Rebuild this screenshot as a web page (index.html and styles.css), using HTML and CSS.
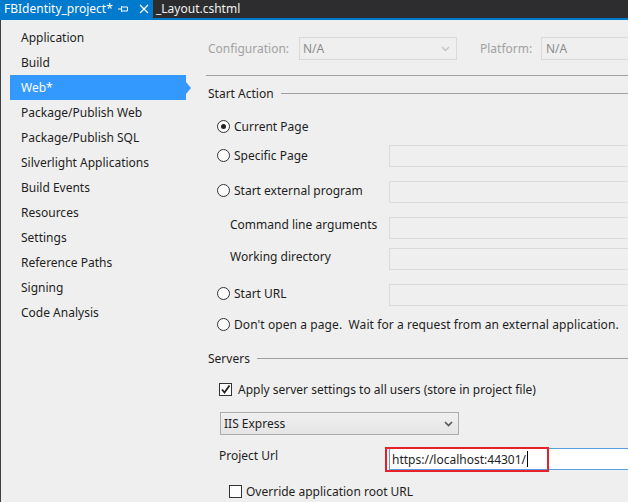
FILE: index.html
```html
<!DOCTYPE html>
<html>
<head>
<meta charset="utf-8">
<link rel="stylesheet" href="styles.css">
</head>
<body>
<div class="tabs">
  <div class="tab active">
    <span class="tab-title">FBIdentity_project*</span>
    <svg class="pin" width="10" height="8" viewBox="0 0 10 8"><path d="M0 4H3M3.5 1V7M3.5 2H9.5V6H3.5" fill="none" stroke="#fff" stroke-width="1"/></svg>
    <svg class="close" width="10" height="10" viewBox="0 0 10 10"><path d="M1 1L9 9M9 1L1 9" stroke="#fff" stroke-width="1.3"/></svg>
  </div>
  <div class="tab">
    <span class="tab-title">_Layout.cshtml</span>
  </div>
</div>
<div class="main">
  <nav class="sidebar">
    <div class="nav-item">Application</div>
    <div class="nav-item">Build</div>
    <div class="nav-item selected">Web*</div>
    <div class="nav-item">Package/Publish Web</div>
    <div class="nav-item">Package/Publish SQL</div>
    <div class="nav-item">Silverlight Applications</div>
    <div class="nav-item">Build Events</div>
    <div class="nav-item">Resources</div>
    <div class="nav-item">Settings</div>
    <div class="nav-item">Reference Paths</div>
    <div class="nav-item">Signing</div>
    <div class="nav-item">Code Analysis</div>
  </nav>
  <section class="content">
    <div class="config-row">
      <span class="dim-label config-label">Configuration:</span>
      <div class="combo disabled config-combo"><span>N/A</span><svg class="chev" width="9" height="6" viewBox="0 0 9 6"><path d="M1 1L4.5 4.5L8 1" fill="none" stroke="#c4c4c4" stroke-width="1.4"/></svg></div>
      <span class="dim-label platform-label">Platform:</span>
      <div class="combo disabled platform-combo"><span>N/A</span></div>
    </div>
    <div class="rule"></div>
    <div class="section-head"><span>Start Action</span><div class="head-line"></div></div>

    <div class="row r-current"><label class="opt"><span class="radio checked"></span>Current Page</label></div>
    <div class="row r-specific"><label class="opt"><span class="radio"></span>Specific Page</label><div class="field"></div></div>
    <div class="row r-ext"><label class="opt"><span class="radio"></span>Start external program</label><div class="field"></div></div>
    <div class="row r-cmd"><span class="sub-label">Command line arguments</span><div class="field"></div></div>
    <div class="row r-work"><span class="sub-label">Working directory</span><div class="field"></div></div>
    <div class="row r-url"><label class="opt"><span class="radio"></span>Start URL</label><div class="field"></div></div>
    <div class="row r-dont"><label class="opt"><span class="radio"></span>Don't open a page.&nbsp; Wait for a request from an external application.</label></div>

    <div class="section-head servers-head"><span>Servers</span><div class="head-line"></div></div>
    <div class="check-row"><span class="checkbox checked"><svg width="11" height="11" viewBox="0 0 11 11"><path d="M2 5.5L4.5 8.5L9.5 1.5" fill="none" stroke="#222" stroke-width="1.8"/></svg></span>Apply server settings to all users (store in project file)</div>
    <div class="combo server-combo"><span>IIS Express</span><svg class="chev" width="9" height="6" viewBox="0 0 9 6"><path d="M1 1L4.5 4.5L8 1" fill="none" stroke="#555" stroke-width="1.6"/></svg></div>
    <div class="url-row">
      <span class="url-label">Project Url</span>
      <div class="url-field"><span class="url-text">https://localhost:44301/</span><span class="caret"></span><div class="highlight"></div></div>
    </div>
    <div class="check-row override"><span class="checkbox"></span>Override application root URL</div>
  </section>
</div>
</body>
</html>
```
FILE: styles.css
```css
* { box-sizing: border-box; }
html, body {
  margin: 0;
  padding: 0;
}
body {
  width: 628px;
  height: 502px;
  overflow: hidden;
  background: #efefef;
  font-family: "Noto Sans", "Open Sans", sans-serif;
  font-size: 12px;
  color: #1e1e1e;
}
.tabs {
  display: flex;
  height: 20px;
  background: #2d2d30;
  border-bottom: 2px solid #007acc;
}
.tab {
  display: flex;
  align-items: center;
  height: 18px;
  padding-left: 4px;
  color: #fff;
  font-size: 12px;
  line-height: 18px;
  flex-shrink: 0;
}
.tab.active {
  background: #007acc;
  width: 153px;
}
.tab:not(.active) { padding-left: 3px; color: #f1f1f1; }
.pin { margin-left: 5px; }
.close { margin-left: 11px; }
.main {
  display: flex;
  height: 482px;
  border-left: 1px solid #3f3f46;
}
.sidebar {
  width: 199px;
  padding-top: 5px;
  flex-shrink: 0;
}
.nav-item {
  height: 25px;
  line-height: 25px;
  padding-left: 20px;
  position: relative;
}
.nav-item.selected {
  background: #3399ff;
  color: #fff;
  margin-left: 9px;
  padding-left: 11px;
  width: 176px;
}
.nav-item.selected::after {
  content: "";
  position: absolute;
  right: -5px;
  top: 7px;
  border-left: 5px solid #3399ff;
  border-top: 6px solid transparent;
  border-bottom: 6px solid transparent;
}
.content {
  flex: 1;
  min-width: 0;
  padding-left: 6px;
  overflow: hidden;
}
.config-row {
  display: flex;
  align-items: center;
  height: 23px;
  margin-top: 17px;
  white-space: nowrap;
}
.config-row > * { flex-shrink: 0; }
.dim-label { color: #a2a2a2; }
.config-label { margin-left: 2px; width: 91px; }
.combo {
  display: flex;
  align-items: center;
  justify-content: space-between;
  height: 23px;
  border: 1px solid #d9d9d9;
  padding: 0 6px 0 3px;
}
.combo.disabled { color: #8c8c8c; }
.config-combo { width: 158px; }
.platform-label { margin-left: 23px; width: 61px; }
.platform-combo { width: 120px; padding-left: 4px; }
.rule {
  height: 1px;
  background: #a0a0a0;
  margin-top: 15px;
}
.section-head {
  display: flex;
  align-items: center;
  height: 17px;
  margin-top: 9px;
  padding-left: 2px;
}
.head-line {
  flex: 1;
  height: 1px;
  background: #a0a0a0;
  margin-left: 7px;
}
.row {
  display: flex;
  align-items: center;
  height: 22px;
  padding-left: 11px;
  white-space: nowrap;
}
.opt {
  display: flex;
  align-items: center;
  width: 172px;
  flex-shrink: 0;
  margin-bottom: 4px;
}
.radio {
  width: 13px;
  height: 13px;
  border: 1px solid #333;
  border-radius: 50%;
  background: #fdfdfd;
  margin-right: 4px;
  position: relative;
  flex-shrink: 0;
}
.radio.checked::after {
  content: "";
  position: absolute;
  left: 3px;
  top: 3px;
  width: 5px;
  height: 5px;
  border-radius: 50%;
  background: #222;
}
.sub-label {
  width: 172px;
  padding-left: 13px;
  flex-shrink: 0;
}
.field {
  flex: 1;
  height: 22px;
  border: 1px solid #dadada;
  margin-right: -4px;
}
.r-current { margin-top: 13px; }
.r-current .opt { margin-bottom: 0; }
.r-specific { margin-top: 8px; }
.r-specific .opt { margin-bottom: 2px; }
.r-ext { margin-top: 14px; }
.r-cmd { margin-top: 14px; align-items: flex-start; }
.r-cmd .sub-label { margin-top: -1px; }
.r-work { margin-top: 9px; align-items: flex-start; }
.r-work .sub-label { margin-top: 0; }
.r-url { margin-top: 14px; }
.r-dont { margin-top: 7px; }
.r-dont .opt { width: auto; margin-bottom: 0; letter-spacing: 0.08px; }
.servers-head { margin-top: 15px; height: 16px; }
.check-row {
  display: flex;
  align-items: center;
  height: 16px;
  margin-top: 15px;
  padding-left: 13px;
  white-space: nowrap;
}
.checkbox {
  width: 13px;
  height: 13px;
  border: 1px solid #333;
  background: #fdfdfd;
  margin-right: 6px;
  display: flex;
  align-items: center;
  justify-content: center;
  flex-shrink: 0;
}
.server-combo {
  width: 239px;
  margin-left: 14px;
  margin-top: 15px;
  border-color: #acacac;
  background: linear-gradient(#f0f0f0, #e5e5e5);
  padding-left: 3px;
  padding-right: 5px;
}
.url-row {
  display: flex;
  align-items: flex-start;
  margin-top: 13px;
  height: 22px;
  padding-left: 13px;
}
.url-label {
  width: 170px;
  margin-top: -1px;
  flex-shrink: 0;
}
.url-field {
  position: relative;
  flex: 1;
  height: 22px;
  background: #fff;
  border: 1px solid #5b9fe3;
  border-right: 0;
  display: flex;
  align-items: center;
  padding-left: 2px;
  margin-right: -4px;
}
.url-text { white-space: nowrap; }
.caret {
  width: 1px;
  height: 16px;
  background: #000;
  margin-left: 1px;
}
.highlight {
  position: absolute;
  left: -5px;
  top: -2px;
  width: 164px;
  height: 25px;
  border: 2px solid #e8202a;
}
.override {
  margin-top: 13px;
  padding-left: 23px;
}
.override .checkbox { margin-right: 4px; }
```
